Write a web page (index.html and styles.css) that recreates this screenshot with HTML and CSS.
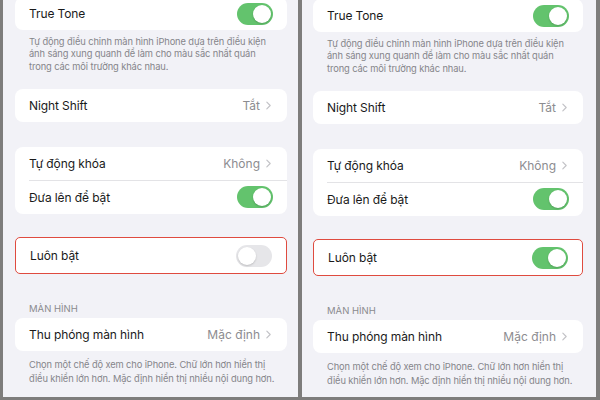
FILE: index.html
```html
<!DOCTYPE html>
<html lang="vi">
<head>
<meta charset="utf-8">
<link rel="stylesheet" href="styles.css">
</head>
<body>
<div class="frame">
  <section class="panel panel-left">
    <div class="card card-top">
      <div class="row"><span class="label">True Tone</span><span class="toggle on"><span class="knob"></span></span></div>
    </div>
    <p class="note note-tt">Tự động điều chỉnh màn hình iPhone dựa trên điều kiện<br>ánh sáng xung quanh để làm cho màu sắc nhất quán<br>trong các môi trường khác nhau.</p>
    <div class="card card-ns">
      <div class="row"><span class="label">Night Shift</span><span class="value">Tắt<svg class="chev" viewBox="0 0 6 10"><path d="M1 1l4 4-4 4"/></svg></span></div>
    </div>
    <div class="card card-lock">
      <div class="row"><span class="label">Tự động khóa</span><span class="value">Không<svg class="chev" viewBox="0 0 6 10"><path d="M1 1l4 4-4 4"/></svg></span></div>
      <div class="row sep"><span class="label">Đưa lên để bật</span><span class="toggle on"><span class="knob"></span></span></div>
    </div>
    <div class="card card-aod">
      <div class="row tall"><span class="label">Luôn bật</span><span class="toggle off"><span class="knob"></span></span></div>
    </div>
    <h3 class="header">MÀN HÌNH</h3>
    <div class="card">
      <div class="row"><span class="label">Thu phóng màn hình</span><span class="value">Mặc định<svg class="chev" viewBox="0 0 6 10"><path d="M1 1l4 4-4 4"/></svg></span></div>
    </div>
    <p class="note note-zoom">Chọn một chế độ xem cho iPhone. Chữ lớn hơn hiển thị<br>điều khiển lớn hơn. Mặc định hiển thị nhiều nội dung hơn.</p>
  </section>
  <section class="panel panel-right">
    <div class="card card-top">
      <div class="row"><span class="label">True Tone</span><span class="toggle on"><span class="knob"></span></span></div>
    </div>
    <p class="note note-tt">Tự động điều chỉnh màn hình iPhone dựa trên điều kiện<br>ánh sáng xung quanh để làm cho màu sắc nhất quán<br>trong các môi trường khác nhau.</p>
    <div class="card card-ns">
      <div class="row"><span class="label">Night Shift</span><span class="value">Tắt<svg class="chev" viewBox="0 0 6 10"><path d="M1 1l4 4-4 4"/></svg></span></div>
    </div>
    <div class="card card-lock">
      <div class="row"><span class="label">Tự động khóa</span><span class="value">Không<svg class="chev" viewBox="0 0 6 10"><path d="M1 1l4 4-4 4"/></svg></span></div>
      <div class="row sep"><span class="label">Đưa lên để bật</span><span class="toggle on"><span class="knob"></span></span></div>
    </div>
    <div class="card card-aod">
      <div class="row tall"><span class="label">Luôn bật</span><span class="toggle on"><span class="knob"></span></span></div>
    </div>
    <h3 class="header">MÀN HÌNH</h3>
    <div class="card">
      <div class="row"><span class="label">Thu phóng màn hình</span><span class="value">Mặc định<svg class="chev" viewBox="0 0 6 10"><path d="M1 1l4 4-4 4"/></svg></span></div>
    </div>
    <p class="note note-zoom">Chọn một chế độ xem cho iPhone. Chữ lớn hơn hiển thị<br>điều khiển lớn hơn. Mặc định hiển thị nhiều nội dung hơn.</p>
  </section>
</div>
</body>
</html>
```

FILE: styles.css
```css
html, body {
  margin: 0;
  padding: 0;
  width: 600px;
  height: 400px;
  overflow: hidden;
  background: #7e7d7c;
  font-family: "Inter", "Liberation Sans", sans-serif;
  color: #111;
}
.frame {
  display: flex;
  gap: 4px;
  padding: 0 4px 0 3px;
  height: 397px;
}
.panel {
  background: #f2f2f7;
  height: 397px;
  overflow: hidden;
  display: flex;
  flex-direction: column;
  box-sizing: border-box;
}
.panel-left {
  width: 295px;
  padding: 0 11px 0 12px;
}
.panel-right {
  width: 294px;
  padding: 2px 13px 0 11px;
}
.card {
  background: #fff;
  border-radius: 8px;
  overflow: hidden;
  flex: none;
}
.card-top {
  margin-top: -3px;
}
.row {
  height: 33px;
  display: flex;
  align-items: center;
  justify-content: space-between;
  padding: 0 14px;
  box-sizing: border-box;
  position: relative;
}
.row.sep {
  height: 34px;
}
.row.sep::before {
  content: "";
  position: absolute;
  left: 14px;
  right: 0;
  top: 0;
  height: 1px;
  background: #e3e3e6;
}
.row.tall {
  height: 35px;
}
.label {
  font-size: 12px;
  letter-spacing: -0.1px;
  color: #1a1a1a;
}
.value {
  display: flex;
  align-items: center;
  gap: 6px;
  font-size: 12px;
  color: #8c8c90;
  margin-right: 2px;
}
.chev {
  width: 5px;
  height: 9px;
  fill: none;
  stroke: #c2c2c6;
  stroke-width: 1.4;
  stroke-linecap: round;
  stroke-linejoin: round;
}
.toggle {
  width: 36px;
  height: 22px;
  border-radius: 11px;
  position: relative;
  flex: none;
}
.toggle.on {
  background: #63c36d;
}
.toggle.off {
  background: #e6e6e9;
}
.knob {
  position: absolute;
  top: 2px;
  width: 18px;
  height: 18px;
  border-radius: 50%;
  background: #fff;
  box-shadow: 0 1px 2px rgba(0,0,0,0.18);
}
.toggle.on .knob {
  right: 2px;
}
.toggle.off .knob {
  left: 2px;
}
.note {
  margin: 0;
  font-size: 9.3px;
  letter-spacing: -0.1px;
  line-height: 12.4px;
  color: #85858a;
  padding: 6px 0 0 14px;
  white-space: nowrap;
}
.card-ns {
  margin-top: 16px;
}
.card-lock {
  margin-top: 25px;
}
.card-aod {
  margin-top: 23px;
  border: 1.5px solid #df4b3f;
  border-radius: 5px;
}
.header {
  margin: 29px 0 0 0;
  padding: 0 14px;
  font-size: 9.5px;
  font-weight: 400;
  color: #8a8a8e;
  line-height: 12px;
  height: 15px;
}
.note-zoom {
  padding-top: 7px;
  line-height: 13.3px;
}
```
